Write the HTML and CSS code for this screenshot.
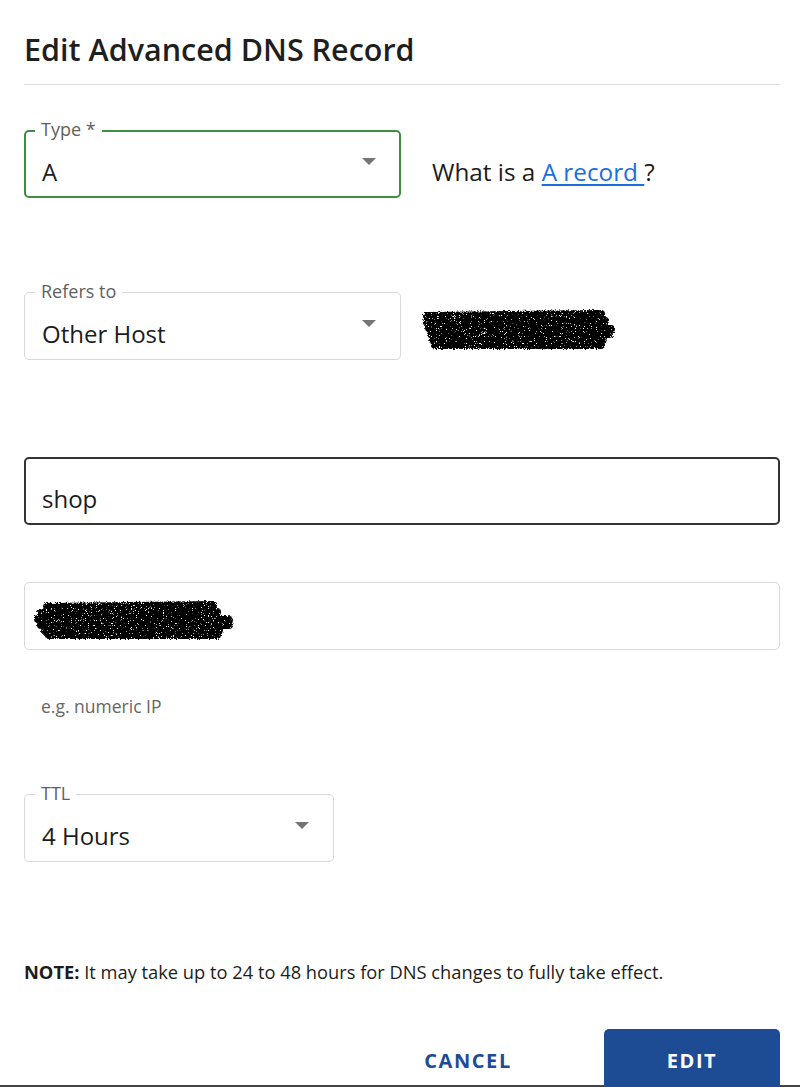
FILE: index.html
```html
<!DOCTYPE html>
<html lang="en">
<head>
<meta charset="utf-8">
<title>Edit Advanced DNS Record</title>
<link rel="stylesheet" href="styles.css">
</head>
<body>
<div class="dialog">
  <header class="head">
    <h1 class="title">Edit Advanced DNS Record</h1>
  </header>

  <div class="row row-type">
    <div class="field field-select field-focus w-half">
      <span class="label">Type *</span>
      <span class="value">A</span>
      <svg class="caret" width="14" height="7" viewBox="0 0 14 7"><path d="M0 0h14L7 7z" fill="#757575"/></svg>
    </div>
    <p class="help">What is a <a href="#" class="link">A record </a>?</p>
  </div>

  <div class="row row-refers">
    <div class="field field-select w-half">
      <span class="label">Refers to</span>
      <span class="value">Other Host</span>
      <svg class="caret" width="14" height="7" viewBox="0 0 14 7"><path d="M0 0h14L7 7z" fill="#757575"/></svg>
    </div>
    <svg class="redact redact-a" width="196" height="44" viewBox="0 0 196 44">
      <defs>
        <filter id="rough" x="-5%" y="-20%" width="110%" height="140%">
          <feTurbulence type="fractalNoise" baseFrequency="0.9" numOctaves="2" seed="3" result="n"/>
          <feDisplacementMap in="SourceGraphic" in2="n" scale="4" result="d"/>
          <feTurbulence type="fractalNoise" baseFrequency="1.4" numOctaves="1" seed="11" result="s"/>
          <feColorMatrix in="s" type="matrix" values="0 0 0 0 0  0 0 0 0 0  0 0 0 0 0  0 0 0 -14 10" result="m"/>
          <feComposite in="d" in2="m" operator="in"/>
        </filter>
      </defs>
      <g stroke="#000" stroke-width="8" stroke-linecap="round" fill="none" filter="url(#rough)">
        <path d="M6 8 L180 6"/>
        <path d="M6 14 L184 13"/>
        <path d="M8 20 L190 21"/>
        <path d="M10 26 L188 26"/>
        <path d="M12 32 L182 31"/>
        <path d="M14 37 L180 37"/>
      </g>
    </svg>
  </div>

  <div class="field field-text field-active w-full row-host">
    <span class="value">shop</span>
  </div>

  <div class="field field-text w-full row-ip">
    <svg class="redact redact-b" width="202" height="40" viewBox="0 0 202 40">
      <defs>
        <filter id="rough2" x="-5%" y="-20%" width="110%" height="140%">
          <feTurbulence type="fractalNoise" baseFrequency="0.9" numOctaves="2" seed="7" result="n"/>
          <feDisplacementMap in="SourceGraphic" in2="n" scale="4" result="d"/>
          <feTurbulence type="fractalNoise" baseFrequency="1.4" numOctaves="1" seed="5" result="s"/>
          <feColorMatrix in="s" type="matrix" values="0 0 0 0 0  0 0 0 0 0  0 0 0 0 0  0 0 0 -14 10" result="m"/>
          <feComposite in="d" in2="m" operator="in"/>
        </filter>
      </defs>
      <g stroke="#000" stroke-width="8" stroke-linecap="round" fill="none" filter="url(#rough2)">
        <path d="M14 7 L180 5"/>
        <path d="M8 13 L184 12"/>
        <path d="M5 19 L196 20"/>
        <path d="M8 25 L196 25"/>
        <path d="M12 31 L186 30"/>
        <path d="M16 35 L184 35"/>
      </g>
    </svg>
  </div>
  <p class="hint">e.g. numeric IP</p>

  <div class="field field-select w-ttl row-ttl">
    <span class="label">TTL</span>
    <span class="value">4 Hours</span>
    <svg class="caret" width="14" height="7" viewBox="0 0 14 7"><path d="M0 0h14L7 7z" fill="#757575"/></svg>
  </div>

  <p class="note"><strong>NOTE:</strong> It may take up to 24 to 48 hours for DNS changes to fully take effect.</p>

  <div class="actions">
    <button class="btn btn-text" type="button">CANCEL</button>
    <button class="btn btn-primary" type="button">EDIT</button>
  </div>
</div>
</body>
</html>
```

FILE: styles.css
```css
html, body {
  margin: 0;
  padding: 0;
  overflow: hidden;
  background: #fff;
}

body {
  font-family: "Open Sans", "Noto Sans", "Liberation Sans", sans-serif;
  color: #222;
}

.dialog {
  box-sizing: border-box;
  width: 800px;
  height: 1087px;
  padding: 0 20px 0 24px;
  border-bottom: 2px solid #444;
}

.head {
  padding-top: 29px;
  padding-bottom: 15px;
  border-bottom: 1px solid #dcdcdc;
}

.title {
  margin: 0;
  font-size: 30.5px;
  line-height: 40px;
  font-weight: 600;
  color: #1f1f1f;
}

.row {
  display: flex;
}

.row-type {
  margin-top: 45px;
  align-items: baseline;
  gap: 31px;
}

.row-refers {
  margin-top: 94px;
  align-items: center;
  gap: 20px;
}

.field {
  position: relative;
  box-sizing: border-box;
  height: 68px;
  border: 1px solid #d9d9d9;
  border-radius: 5px;
  display: flex;
  align-items: flex-start;
  padding: 27px 24px 0 17px;
  background: #fff;
}

.field-focus {
  border: 2px solid #3e8e41;
  padding: 26px 23px 0 16px;
}

.field-active {
  border: 2px solid #333;
  padding: 26px 23px 0 16px;
}

.w-half { width: 377px; flex: none; }
.w-full { width: 756px; }
.w-ttl { width: 310px; }

.label {
  position: absolute;
  top: -14px;
  left: 10px;
  padding: 0 6px;
  background: #fff;
  font-size: 18px;
  line-height: 24px;
  color: #5f5f5f;
}

.field-focus .label { left: 9px; top: -15px; }

.value {
  flex: 1;
  font-size: 24px;
  line-height: 28px;
  color: #1c1c1c;
}

.caret {
  flex: none;
}

.help {
  margin: 0;
  font-size: 24.3px;
  line-height: 28px;
  color: #1c1c1c;
}

.link {
  color: #1a6fdb;
  text-decoration: underline;
  text-underline-offset: 3px;
}

.redact-a {
  margin-top: 8px;
}

.row-host {
  margin-top: 97px;
}

.row-ip {
  margin-top: 57px;
  padding: 0 0 0 8px;
  align-items: center;
}

.redact-b {
  margin-top: 7px;
}

.hint {
  margin: 45px 0 0 17px;
  font-size: 17.5px;
  line-height: 22px;
  color: #666;
}

.row-ttl {
  margin-top: 77px;
}

.note {
  margin: 98px 0 0 0;
  font-size: 18.3px;
  line-height: 24px;
  color: #1c1c1c;
}

.note strong { font-weight: 700; }

.actions {
  display: flex;
  justify-content: flex-end;
  gap: 48px;
  margin-top: 45px;
}

.btn {
  width: 176px;
  height: 62px;
  border: none;
  border-radius: 5px;
  font-family: "Open Sans", "Noto Sans", sans-serif;
  font-size: 20px;
  font-weight: 700;
  letter-spacing: 1.6px;
  cursor: pointer;
}

.btn-text {
  background: transparent;
  color: #1d4b94;
}

.btn-primary {
  background: #1d4b94;
  color: #fff;
}
```
